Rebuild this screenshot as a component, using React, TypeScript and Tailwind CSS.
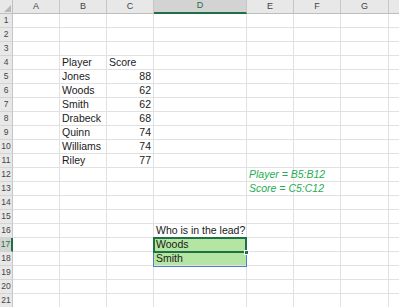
import React from "react";

type Col = { l: string; w: string };
const cols: Col[] = [
  { l: "A", w: "w-[47px]" },
  { l: "B", w: "w-[47px]" },
  { l: "C", w: "w-[47px]" },
  { l: "D", w: "w-[93px]" },
  { l: "E", w: "w-[47px]" },
  { l: "F", w: "w-[47px]" },
  { l: "G", w: "w-[48px]" },
  { l: "", w: "w-[20px]" },
];

type CellData = { t: string; right?: boolean; green?: boolean };
const data: Record<string, CellData> = {
  B4: { t: "Player" },
  C4: { t: "Score" },
  B5: { t: "Jones" },
  C5: { t: "88", right: true },
  B6: { t: "Woods" },
  C6: { t: "62", right: true },
  B7: { t: "Smith" },
  C7: { t: "62", right: true },
  B8: { t: "Drabeck" },
  C8: { t: "68", right: true },
  B9: { t: "Quinn" },
  C9: { t: "74", right: true },
  B10: { t: "Williams" },
  C10: { t: "74", right: true },
  B11: { t: "Riley" },
  C11: { t: "77", right: true },
  E12: { t: "Player = B5:B12", green: true },
  E13: { t: "Score = C5:C12", green: true },
  D16: { t: "Who is in the lead?" },
  D17: { t: "Woods" },
  D18: { t: "Smith" },
};

const rows = Array.from({ length: 21 }, (_, i) => i + 1);

export default function App() {
  return (
    <div
      className="relative w-[399px] h-[307px] overflow-hidden bg-white"
      style={{ fontFamily: '"Liberation Sans", Arial, sans-serif' }}
    >
      {/* header row */}
      <div className="flex h-[14px] bg-[#e8e8e8]">
        <div className="relative w-[13px] shrink-0 border-r border-b border-[#c0c0c0]">
          <div className="absolute right-[1px] bottom-[1px] w-0 h-0 border-l-[7px] border-l-transparent border-b-[7px] border-b-[#b8b8b8]" />
        </div>
        {cols.map((c, i) => (
          <div
            key={i}
            className={`${c.w} shrink-0 flex items-center justify-center text-[9px] border-r border-r-[#c6c6c6] ${
              c.l === "D"
                ? "bg-[#d3d3d3] text-[#1e6e42] border-b-2 border-b-[#1e7145]"
                : "text-[#444] border-b border-b-[#bdbdbd]"
            }`}
          >
            {c.l}
          </div>
        ))}
      </div>

      {rows.map((r) => (
        <div key={r} className="flex h-[14px]">
          <div
            className={`w-[13px] shrink-0 flex items-center justify-center text-[8.5px] border-b border-[#d4d4d4] ${
              r === 17
                ? "bg-[#d3d3d3] text-[#1e6e42] border-r-2 border-r-[#1e7145]"
                : "bg-[#e8e8e8] text-[#444] border-r border-r-[#c6c6c6]"
            }`}
          >
            {r}
          </div>
          {cols.map((c, i) => {
            const key = `${["A", "B", "C", "D", "E", "F", "G", "H"][i]}${r}`;
            const d = data[key];
            const sel = key === "D17" || key === "D18";
            return (
              <div
                key={key}
                className={`${c.w} shrink-0 border-r border-b border-[#e1e1e1] flex items-center overflow-visible whitespace-nowrap px-[2px] text-[10.5px] leading-none ${
                  sel ? "bg-[#b4e5a2]" : ""
                } ${d?.right ? "justify-end" : "justify-start"} ${
                  d?.green ? "italic text-[#25ad52]" : "text-[#1a1a1a]"
                }`}
              >
                {d ? d.t : null}
              </div>
            );
          })}
        </div>
      ))}

      {/* spill range outline */}
      <div className="absolute left-[153px] top-[237px] w-[94px] h-[30px] border border-[#4a7fd6]" />
      {/* active cell */}
      <div className="absolute left-[153px] top-[237px] w-[94px] h-[16px] border-2 border-[#1e7145]" />
      {/* fill handle */}
      <div className="absolute left-[244px] top-[250px] w-[5px] h-[5px] bg-[#1e7145] border border-white" />
    </div>
  );
}
